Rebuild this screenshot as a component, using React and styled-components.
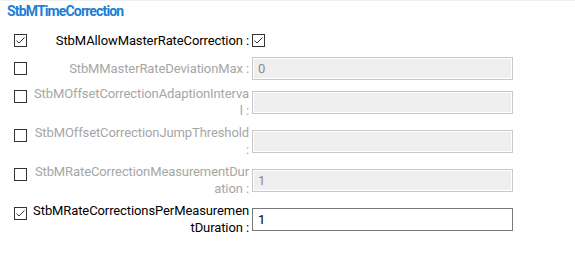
import React from "react";
import styled, { createGlobalStyle } from "styled-components";

const GlobalStyle = createGlobalStyle`
  body {
    margin: 0;
    background: #fff;
    font-family: Roboto, "Noto Sans", sans-serif;
  }
`;

// label text carries its own wrap point, the way the tool lays it out
const fields = [
  { id: "allow", label: "StbMAllowMasterRateCorrection :", on: true, type: "check", value: true },
  { id: "dev", label: "StbMMasterRateDeviationMax :", on: false, value: "0" },
  { id: "adapt", label: "StbMOffsetCorrectionAdaptionInterva\nl :", on: false, value: "" },
  { id: "jump", label: "StbMOffsetCorrectionJumpThreshold\n:", on: false, value: "" },
  { id: "dur", label: "StbMRateCorrectionMeasurementDur\nation :", on: false, value: "1" },
  { id: "per", label: "StbMRateCorrectionsPerMeasuremen\ntDuration :", on: true, value: "1" },
];

const CheckBox = ({ checked }) => (
  <Box>
    <svg width="13" height="13" viewBox="0 0 13 13">
      <rect x="0.5" y="0.5" width="12" height="12" fill="#fff" stroke="#333" />
      {checked && (
        <polyline points="2.5,6.5 5,9 10.5,3.5" fill="none" stroke="#333" strokeWidth="1" />
      )}
    </svg>
  </Box>
);

const App = () => {
  return (
    <Page>
      <GlobalStyle />
      <Title>StbMTimeCorrection</Title>
      <Form>
        {fields.map((f) => (
          <Row key={f.id}>
            <Toggle>
              <CheckBox checked={f.on} />
            </Toggle>
            <Label $on={f.on}>{f.label}</Label>
            {f.type === "check" ? (
              <CheckBox checked={f.value} />
            ) : (
              <Input $on={f.on}>{f.value}</Input>
            )}
          </Row>
        ))}
      </Form>
    </Page>
  );
};

export default App;

const Page = styled.div`
  width: 575px;
  height: 279px;
  border-top: 1px solid #eef2f7;
  box-sizing: border-box;
`;

const Title = styled.div`
  padding: 1px 0 0 7px;
  height: 18px;
  line-height: 18px;
  font-size: 14px;
  font-weight: 700;
  letter-spacing: -0.85px;
  color: #1c7ed6;
`;

const Form = styled.div`
  display: flex;
  flex-direction: column;
  gap: 5px;
  margin-top: 9px;
  padding-left: 14px;
`;

const Row = styled.div`
  display: grid;
  grid-template-columns: 13px 217px 259px;
  column-gap: 5px;
  align-items: center;
  min-height: 23px;

  & > :last-child {
    margin-left: -2px;
  }
`;

const Toggle = styled.div`
  align-self: start;
  margin-top: 5px;
  display: flex;
`;

const Box = styled.span`
  display: flex;
  width: 13px;
  height: 13px;
`;

const Label = styled.div`
  white-space: pre;
  text-align: right;
  font-size: 13px;
  line-height: 17px;
  letter-spacing: -0.1px;
  color: ${(p) => (p.$on ? "#000" : "#a6a6a6")};
`;

const Input = styled.div`
  box-sizing: border-box;
  height: 23px;
  padding: 0 5px;
  display: flex;
  align-items: center;
  font-size: 13px;
  border: 1px solid ${(p) => (p.$on ? "#7a7a7a" : "#c8c8c8")};
  background: ${(p) => (p.$on ? "#fff" : "#efefef")};
  box-shadow: ${(p) => (p.$on ? "none" : "inset 0 0 0 1px #fff")};
  color: ${(p) => (p.$on ? "#000" : "#8a8a8a")};
`;
